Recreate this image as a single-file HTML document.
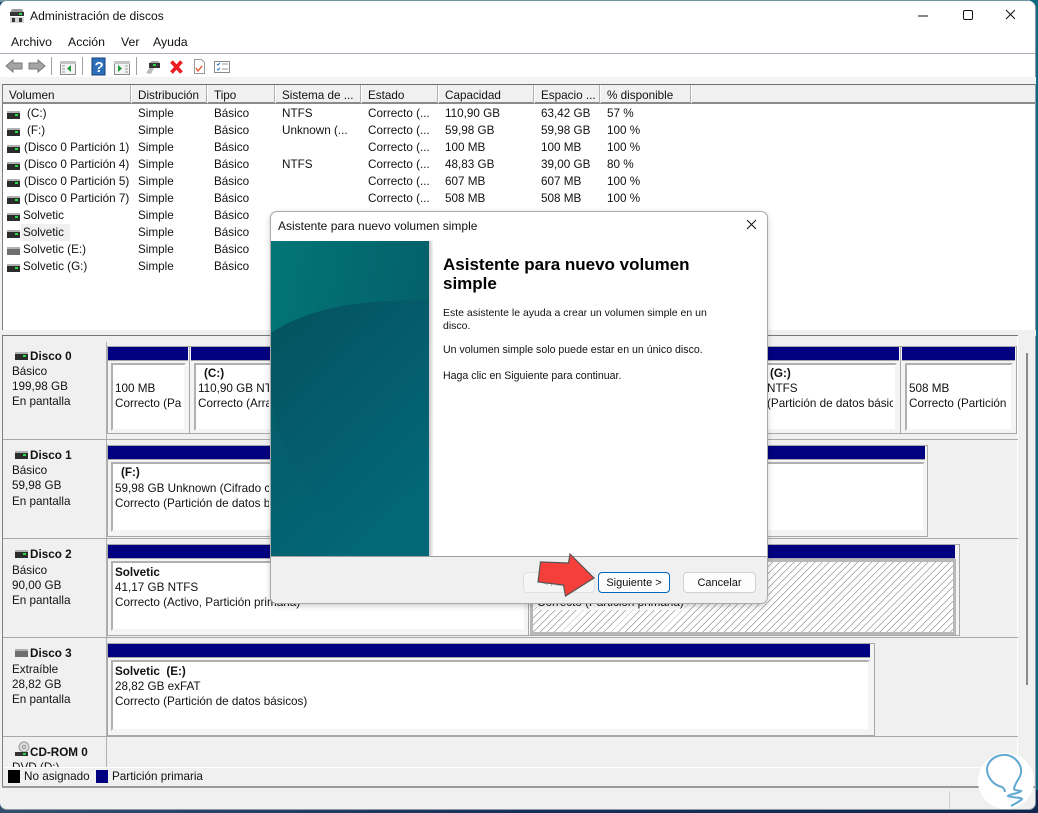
<!DOCTYPE html>
<html lang="es"><head><meta charset="utf-8"><title>Administración de discos</title>
<style>
html,body{margin:0;padding:0;width:1038px;height:813px;overflow:hidden;background:#1d4f78}
body{position:relative;font-family:"Liberation Sans",sans-serif;font-size:12px;color:#111}
div,span.a{position:absolute;box-sizing:border-box}
.t{position:absolute;white-space:nowrap;line-height:14px;height:14px;font-size:11.7px}
.m{font-size:12.3px}
.b{font-weight:bold}
.d{position:absolute;width:13px;height:6px;background:#2c2c2c;border-top:2px solid #b0b0b0;margin-left:1px}
.d:after{content:"";position:absolute;right:2px;top:1px;width:3px;height:2px;background:#22e040}
.d.g{background:#6e6e6e}.d.g:after{display:none}
.sep{position:absolute;top:85px;height:18px;width:2px;background:#b0b0b0;border-right:1px solid #fff}
.bar{position:absolute;height:13px;background:#000080;box-shadow:0 1px 0 #a8a8a8}
.box{position:absolute;background:#fff;border:2px solid;border-color:#b0b0b0 #f4f4f4 #f4f4f4 #b0b0b0}
.part{position:absolute;border:1px solid #a8a8a8;background:#f4f4f4}
.hl{position:absolute;height:1px;background:#a8a8a8}
.btn{position:absolute;border:1px solid #d0d0d0;border-radius:4px;background:#fdfdfd;text-align:center;line-height:20px;font-size:11px}
</style></head><body>
<div style="left:0;top:0;width:1038px;height:2px;background:#6f96a4"></div>
<div style="left:1030px;top:0;width:8px;height:813px;background:#0d6a80"></div>
<div style="left:0;top:790px;width:1038px;height:23px;background:linear-gradient(90deg,#33506e,#16305c 50%,#10284e)"></div>

<div id="win" style="left:0;top:1px;width:1036px;height:809px;background:#f0f0f0;border-radius:7px;overflow:hidden;border:1px solid #8a9aa8;border-width:0 1px 1px 0">
<div style="left:0;top:0;width:1036px;height:53px;background:#fff"></div>
<div style="left:0;top:52px;width:1036px;height:1px;background:#adadbd"></div>
<div style="left:0;top:53px;width:1036px;height:23px;background:#fff"></div>
</div>

<!-- title icon -->
<svg style="position:absolute;left:9px;top:8px" width="16" height="15" viewBox="0 0 16 15"><path d="M3 1h10l2 4H1z" fill="#9a9a9a"/><rect x="1" y="4" width="14" height="4" fill="#333"/><rect x="10" y="5" width="3" height="2" fill="#2bd04a"/><rect x="1" y="9" width="14" height="6" fill="#d5d5d5"/><rect x="3" y="10" width="3" height="4" fill="#333"/><rect x="10" y="10" width="3" height="4" fill="#333"/></svg>
<span class="t" style="left:30px;top:9px;font-size:12.1px">Administración de discos</span>
<svg style="position:absolute;left:915px;top:8px" width="100" height="16" viewBox="0 0 100 16" fill="none" stroke="#111" stroke-width="1"><path d="M3 8h10"/><rect x="48.500" y="2.500" width="9" height="9" rx="1.500"/><path d="M94 2l9 9M103 2l-9 9" transform="translate(-3 0)"/></svg>

<span class="t m" style="left:11px;top:35px">Archivo</span>
<span class="t m" style="left:68px;top:35px">Acción</span>
<span class="t m" style="left:121px;top:35px">Ver</span>
<span class="t m" style="left:153px;top:35px">Ayuda</span>

<!-- toolbar -->
<svg style="position:absolute;left:0;top:54px" width="240" height="24" viewBox="0 0 240 24">
<path d="M6 12l7-6v3h9v6h-9v3z" fill="#a4a4a4" stroke="#7a7a7a"/>
<path d="M45 12l-7-6v3h-9v6h9v3z" fill="#a4a4a4" stroke="#7a7a7a"/>
<path d="M51.500 3v18M82.500 3v18M136.500 3v18" stroke="#a0a0a0"/>
<rect x="60.500" y="7.500" width="15" height="13" fill="#f4f4f4" stroke="#8a8a8a"/><rect x="60" y="7" width="16" height="3" fill="#c4c4c4"/><path d="M71 11v7l-4-3.500z" fill="#1c9a3c"/><path d="M62 12h3M62 15h3M62 18h3" stroke="#999"/>
<rect x="92" y="4" width="13" height="17" fill="#2d6fb8" stroke="#16407a"/><text x="94.500" y="18" font-family="Liberation Sans" font-weight="bold" font-size="15" fill="#fff">?</text>
<rect x="114.500" y="7.500" width="15" height="13" fill="#f4f4f4" stroke="#8a8a8a"/><rect x="114" y="7" width="16" height="3" fill="#c4c4c4"/><path d="M118 11v7l4-3.500z" fill="#1c9a3c"/><path d="M125 12h3M125 15h3M125 18h3" stroke="#999"/>
<path d="M146 19l4-6 4 1-3 6z" fill="#bbb"/><rect x="149" y="9" width="11" height="5" fill="#333"/><rect x="153" y="10" width="3" height="2" fill="#2bd04a"/><path d="M149 9l3-2h6l2 2" fill="#aaa"/>
<path d="M171.500 7.500L181.500 18.500M181.500 7.500L171.500 18.500" stroke="#ec1c24" stroke-width="3.600" fill="none"/>
<path d="M194.500 5.500h7l3 3v11h-10z" fill="#fff" stroke="#999"/><path d="M196 14l2 3 4-5" stroke="#e8552a" stroke-width="1.400" fill="none"/>
<rect x="214.500" y="7.500" width="15" height="11" fill="#fff" stroke="#8a8a8a"/><path d="M217 10l1 1 2-2M217 15l1 1 2-2" stroke="#2f6fc0" fill="none"/><path d="M222 10h6M222 15h6" stroke="#999"/>
</svg>

<!-- list -->
<div style="left:0;top:77px;width:1036px;height:7px;background:#f3f3f3"></div>
<div style="left:2px;top:84px;width:1033px;height:1px;background:#6f6f6f"></div>
<div style="left:2px;top:85px;width:1033px;height:19px;background:#f0f0f0;border-bottom:2px solid #8a8a8a"></div>
<div style="left:2px;top:104px;width:1033px;height:226px;background:#fff"></div>
<div style="left:2px;top:84px;width:1px;height:246px;background:#808080"></div>
<div class="sep" style="left:130px"></div><div class="sep" style="left:206px"></div><div class="sep" style="left:274px"></div><div class="sep" style="left:360px"></div><div class="sep" style="left:437px"></div><div class="sep" style="left:533px"></div><div class="sep" style="left:599px"></div><div class="sep" style="left:690px"></div>
<div style="left:0;top:1px;width:700px;height:270px">
<span class="t" style="left:9px;top:88px">Volumen</span><span class="t" style="left:138px;top:88px">Distribución</span><span class="t" style="left:214px;top:88px">Tipo</span><span class="t" style="left:282px;top:88px">Sistema de ...</span><span class="t" style="left:368px;top:88px">Estado</span><span class="t" style="left:445px;top:88px">Capacidad</span><span class="t" style="left:541px;top:88px">Espacio ...</span><span class="t" style="left:607px;top:88px">% disponible</span>

<span class="d" style="left:6px;top:110px"></span><span class="t" style="left:27px;top:106px">(C:)</span><span class="t" style="left:138px;top:106px">Simple</span><span class="t" style="left:214px;top:106px">Básico</span><span class="t" style="left:282px;top:106px">NTFS</span><span class="t" style="left:368px;top:106px">Correcto (...</span><span class="t" style="left:445px;top:106px">110,90 GB</span><span class="t" style="left:541px;top:106px">63,42 GB</span><span class="t" style="left:607px;top:106px">57 %</span>
<span class="d" style="left:6px;top:127px"></span><span class="t" style="left:27px;top:123px">(F:)</span><span class="t" style="left:138px;top:123px">Simple</span><span class="t" style="left:214px;top:123px">Básico</span><span class="t" style="left:282px;top:123px">Unknown (...</span><span class="t" style="left:368px;top:123px">Correcto (...</span><span class="t" style="left:445px;top:123px">59,98 GB</span><span class="t" style="left:541px;top:123px">59,98 GB</span><span class="t" style="left:607px;top:123px">100 %</span>
<span class="d" style="left:6px;top:144px"></span><span class="t" style="left:24px;top:140px">(Disco 0 Partición 1)</span><span class="t" style="left:138px;top:140px">Simple</span><span class="t" style="left:214px;top:140px">Básico</span><span class="t" style="left:368px;top:140px">Correcto (...</span><span class="t" style="left:445px;top:140px">100 MB</span><span class="t" style="left:541px;top:140px">100 MB</span><span class="t" style="left:607px;top:140px">100 %</span>
<span class="d" style="left:6px;top:161px"></span><span class="t" style="left:24px;top:157px">(Disco 0 Partición 4)</span><span class="t" style="left:138px;top:157px">Simple</span><span class="t" style="left:214px;top:157px">Básico</span><span class="t" style="left:282px;top:157px">NTFS</span><span class="t" style="left:368px;top:157px">Correcto (...</span><span class="t" style="left:445px;top:157px">48,83 GB</span><span class="t" style="left:541px;top:157px">39,00 GB</span><span class="t" style="left:607px;top:157px">80 %</span>
<span class="d" style="left:6px;top:178px"></span><span class="t" style="left:24px;top:174px">(Disco 0 Partición 5)</span><span class="t" style="left:138px;top:174px">Simple</span><span class="t" style="left:214px;top:174px">Básico</span><span class="t" style="left:368px;top:174px">Correcto (...</span><span class="t" style="left:445px;top:174px">607 MB</span><span class="t" style="left:541px;top:174px">607 MB</span><span class="t" style="left:607px;top:174px">100 %</span>
<span class="d" style="left:6px;top:195px"></span><span class="t" style="left:24px;top:191px">(Disco 0 Partición 7)</span><span class="t" style="left:138px;top:191px">Simple</span><span class="t" style="left:214px;top:191px">Básico</span><span class="t" style="left:368px;top:191px">Correcto (...</span><span class="t" style="left:445px;top:191px">508 MB</span><span class="t" style="left:541px;top:191px">508 MB</span><span class="t" style="left:607px;top:191px">100 %</span>
<span class="d" style="left:6px;top:212px"></span><span class="t" style="left:23px;top:208px">Solvetic</span><span class="t" style="left:138px;top:208px">Simple</span><span class="t" style="left:214px;top:208px">Básico</span>
<div style="left:21px;top:223px;width:49px;height:17px;background:#f0f0f0"></div>
<span class="d" style="left:6px;top:229px"></span><span class="t" style="left:23px;top:225px">Solvetic</span><span class="t" style="left:138px;top:225px">Simple</span><span class="t" style="left:214px;top:225px">Básico</span>
<span class="d g" style="left:6px;top:246px"></span><span class="t" style="left:23px;top:242px">Solvetic (E:)</span><span class="t" style="left:138px;top:242px">Simple</span><span class="t" style="left:214px;top:242px">Básico</span>
<span class="d" style="left:6px;top:263px"></span><span class="t" style="left:23px;top:259px">Solvetic (G:)</span><span class="t" style="left:138px;top:259px">Simple</span><span class="t" style="left:214px;top:259px">Básico</span>
</div>

<!-- splitter / graphic -->
<div style="left:0;top:330px;width:1036px;height:6px;background:#f0f0f0"></div>
<div style="left:2px;top:335px;width:1016px;height:1px;background:#777"></div>
<div style="left:2px;top:336px;width:1px;height:450px;background:#808080"></div>
<div style="left:1017px;top:336px;width:1px;height:432px;background:#fff"></div>
<div style="left:1026px;top:353px;width:2px;height:332px;background:#8a8a8a"></div>
<div style="left:106px;top:342px;width:1px;height:426px;background:#b0b0b0"></div>
<div class="hl" style="left:3px;top:439px;width:1015px"></div><div class="hl" style="left:3px;top:538px;width:1015px"></div><div class="hl" style="left:3px;top:637px;width:1015px"></div><div class="hl" style="left:3px;top:736px;width:1015px"></div>

<span class="d" style="left:14px;top:352px"></span><span class="t b" style="left:30px;top:350px">Disco 0</span><span class="t" style="left:12px;top:365px">Básico</span><span class="t" style="left:12px;top:380px">199,98 GB</span><span class="t" style="left:12px;top:395px">En pantalla</span>
<span class="d" style="left:14px;top:451px"></span><span class="t b" style="left:30px;top:449px">Disco 1</span><span class="t" style="left:12px;top:464px">Básico</span><span class="t" style="left:12px;top:479px">59,98 GB</span><span class="t" style="left:12px;top:495px">En pantalla</span>
<span class="d" style="left:14px;top:550px"></span><span class="t b" style="left:30px;top:548px">Disco 2</span><span class="t" style="left:12px;top:564px">Básico</span><span class="t" style="left:12px;top:579px">90,00 GB</span><span class="t" style="left:12px;top:594px">En pantalla</span>
<span class="d g" style="left:14px;top:649px"></span><span class="t b" style="left:30px;top:647px">Disco 3</span><span class="t" style="left:12px;top:663px">Extraíble</span><span class="t" style="left:12px;top:678px">28,82 GB</span><span class="t" style="left:12px;top:693px">En pantalla</span>
<svg style="position:absolute;left:15px;top:741px" width="15" height="16" viewBox="0 0 15 16"><circle cx="9" cy="6" r="5" fill="#ddd" stroke="#999"/><circle cx="9" cy="6" r="1.500" fill="#fff" stroke="#888"/><rect x="0" y="11" width="13" height="4" fill="#333"/><rect x="8" y="12" width="3" height="2" fill="#2bd04a"/></svg>
<span class="t b" style="left:30px;top:746px">CD-ROM 0</span><span class="t" style="left:12px;top:761px;height:7px;overflow:hidden">DVD (D:)</span>

<!-- Disk 0 -->
<div class="part" style="left:107px;top:346px;width:910px;height:88px"></div>
<div class="bar" style="left:108px;top:347px;width:80px"></div><div class="bar" style="left:191px;top:347px;width:708px"></div><div class="bar" style="left:902px;top:347px;width:113px"></div>
<div style="left:189px;top:347px;width:1px;height:86px;background:#a8a8a8"></div><div style="left:900px;top:347px;width:1px;height:86px;background:#a8a8a8"></div>
<div class="box" style="left:111px;top:363px;width:75px;height:68px"></div><div class="box" style="left:194px;top:363px;width:703px;height:68px"></div><div class="box" style="left:905px;top:363px;width:108px;height:68px"></div>
<span class="t" style="left:115px;top:382px">100 MB</span><span class="t" style="left:115px;top:397px;width:66px;overflow:hidden">Correcto (Pa</span>
<span class="t b" style="left:204px;top:367px">(C:)</span><span class="t" style="left:198px;top:382px;width:71px;overflow:hidden">110,90 GB NTFS</span><span class="t" style="left:198px;top:397px;width:71px;overflow:hidden">Correcto (Arranque</span>
<span class="t b" style="left:770px;top:367px">(G:)</span><span class="t" style="left:767px;top:382px">NTFS</span><span class="t" style="left:767px;top:397px;width:126px;overflow:hidden">(Partición de datos básicos)</span>
<span class="t" style="left:909px;top:382px">508 MB</span><span class="t" style="left:909px;top:397px;width:100px;overflow:hidden">Correcto (Partición</span>
<!-- Disk 1 -->
<div class="part" style="left:107px;top:445px;width:821px;height:92px"></div>
<div class="bar" style="left:108px;top:446px;width:817px"></div>
<div class="box" style="left:111px;top:462px;width:814px;height:70px"></div>
<span class="t b" style="left:121px;top:466px">(F:)</span><span class="t" style="left:115px;top:482px;width:154px;overflow:hidden">59,98 GB Unknown (Cifrado con BitLocker)</span><span class="t" style="left:115px;top:497px;width:154px;overflow:hidden">Correcto (Partición de datos básicos)</span>
<!-- Disk 2 -->
<div class="part" style="left:107px;top:544px;width:853px;height:92px"></div>
<div class="bar" style="left:108px;top:545px;width:847px"></div>
<div style="left:528px;top:545px;width:1px;height:90px;background:#a8a8a8"></div>
<div class="box" style="left:111px;top:561px;width:415px;height:70px"></div>
<div style="left:530px;top:559px;width:426px;height:76px;border:3px solid #b8b8b8;background:repeating-linear-gradient(135deg,#fff 0,#fff 4.300px,#999 4.300px,#999 5px)"></div>
<span class="t b" style="left:115px;top:566px">Solvetic</span><span class="t" style="left:115px;top:581px">41,17 GB NTFS</span><span class="t" style="left:115px;top:596px">Correcto (Activo, Partición primaria)</span>
<span class="t" style="left:537px;top:596px;background:#fff">Correcto (Partición primaria)</span>
<!-- Disk 3 -->
<div class="part" style="left:107px;top:643px;width:768px;height:93px"></div>
<div class="bar" style="left:108px;top:644px;width:762px"></div>
<div class="box" style="left:111px;top:660px;width:759px;height:71px"></div>
<span class="t b" style="left:115px;top:665px">Solvetic&nbsp; (E:)</span><span class="t" style="left:115px;top:680px">28,82 GB exFAT</span><span class="t" style="left:115px;top:695px">Correcto (Partición de datos básicos)</span>

<!-- legend -->
<div style="left:3px;top:767px;width:1015px;height:19px;background:#f0f0f0;border-top:1px solid #fff"></div>
<div style="left:2px;top:786px;width:1034px;height:2px;background:#9a9a9a"></div>
<div style="left:8px;top:770px;width:12px;height:13px;background:#000"></div><span class="t" style="left:24px;top:770px">No asignado</span>
<div style="left:96px;top:770px;width:12px;height:13px;background:#000080"></div><span class="t" style="left:112px;top:770px">Partición primaria</span>
<div style="left:949px;top:791px;width:1px;height:18px;background:#d0d0d0"></div>

<!-- Dialog -->
<div style="left:270px;top:211px;width:498px;height:393px;background:#fff;border:1px solid #a8a8a8;border-radius:7px;overflow:hidden;box-shadow:0 2px 6px rgba(0,0,0,.2)">
<svg style="position:absolute;left:-1px;top:29px" width="159" height="315" viewBox="0 0 159 316" preserveAspectRatio="none">
<defs><linearGradient id="g1" x1="0" y1="0" x2="1" y2=".35"><stop offset="0" stop-color="#027676"/><stop offset="1" stop-color="#045f6a"/></linearGradient>
<linearGradient id="g2" x1="0" y1="0" x2=".6" y2="1"><stop offset="0" stop-color="#04525e"/><stop offset=".5" stop-color="#045c6c"/><stop offset="1" stop-color="#026878"/></linearGradient>
<linearGradient id="g3" x1="0" y1="0" x2="1" y2="1"><stop offset="0" stop-color="#036a6e" stop-opacity=".3"/><stop offset="1" stop-color="#026878" stop-opacity="0"/></linearGradient></defs>
<rect width="159" height="316" fill="url(#g1)"/>
<path d="M0 93C40 65 100 58 159 60V316H0z" fill="url(#g2)"/>
<path d="M0 150C12 230 50 270 90 316H0z" fill="url(#g3)"/>
</svg>
<div style="left:158px;top:29px;width:4px;height:315px;background:linear-gradient(90deg,#c8c8c8,#f4f4f4)"></div>
<div style="left:0;top:344px;width:498px;height:49px;background:#f0f0f0;border-top:1px solid #a0a0a0"></div>
</div>
<span class="t" style="left:278px;top:219px;font-size:12px">Asistente para nuevo volumen simple</span>
<svg style="position:absolute;left:746px;top:219px" width="11" height="11" viewBox="0 0 11 11" stroke="#111" fill="none"><path d="M1 1l9 9M10 1l-9 9"/></svg>
<div style="left:443px;top:255px;width:310px;font-weight:bold;font-size:17px;line-height:19px;color:#000">Asistente para nuevo volumen<br>simple</div>
<div style="left:443px;top:307px;width:300px;font-size:10.5px;line-height:13px;color:#111">Este asistente le ayuda a crear un volumen simple en un<br>disco.</div>
<span class="t" style="left:443px;top:343px;font-size:10.6px">Un volumen simple solo puede estar en un único disco.</span>
<span class="t" style="left:443px;top:369px;font-size:10.6px">Haga clic en Siguiente para continuar.</span>
<div class="btn" style="left:523px;top:572px;width:72px;height:21px;color:#aaa;border-color:#e0e0e0;background:#f5f5f5">&lt; Atrás</div>
<div class="btn" style="left:598px;top:572px;width:72px;height:21px;border:1.500px solid #0067c0">Siguiente &gt;</div>
<div class="btn" style="left:683px;top:572px;width:73px;height:21px">Cancelar</div>
<svg style="position:absolute;left:530px;top:548px" width="72" height="54" viewBox="530 548 72 54"><path d="M570 554L594 578 565.500 596 563.500 585 538 582 540.500 562 568.500 563z" fill="#f43f3b" stroke="#555" stroke-width="1.200"/></svg>

<!-- logo -->
<svg style="position:absolute;left:976px;top:750px" width="62" height="60" viewBox="976 750 62 60"><circle cx="1006" cy="781" r="28" fill="#fff"/><path d="M1002 787C993 785 987 777 987 769 988 759 998 754 1007 755 1016 757 1022 765 1021 773 1020 779 1015 782 1014 789 1015 791 1019 790 1021 791 1018 794 1009 794 1008 796 1012 798 1021 797 1022 799 1018 803 1014 804 1011 806M1002 787C1004 788 1005 791 1005 792" fill="none" stroke="#5ea8d2" stroke-width="2"/></svg>
</body></html>
